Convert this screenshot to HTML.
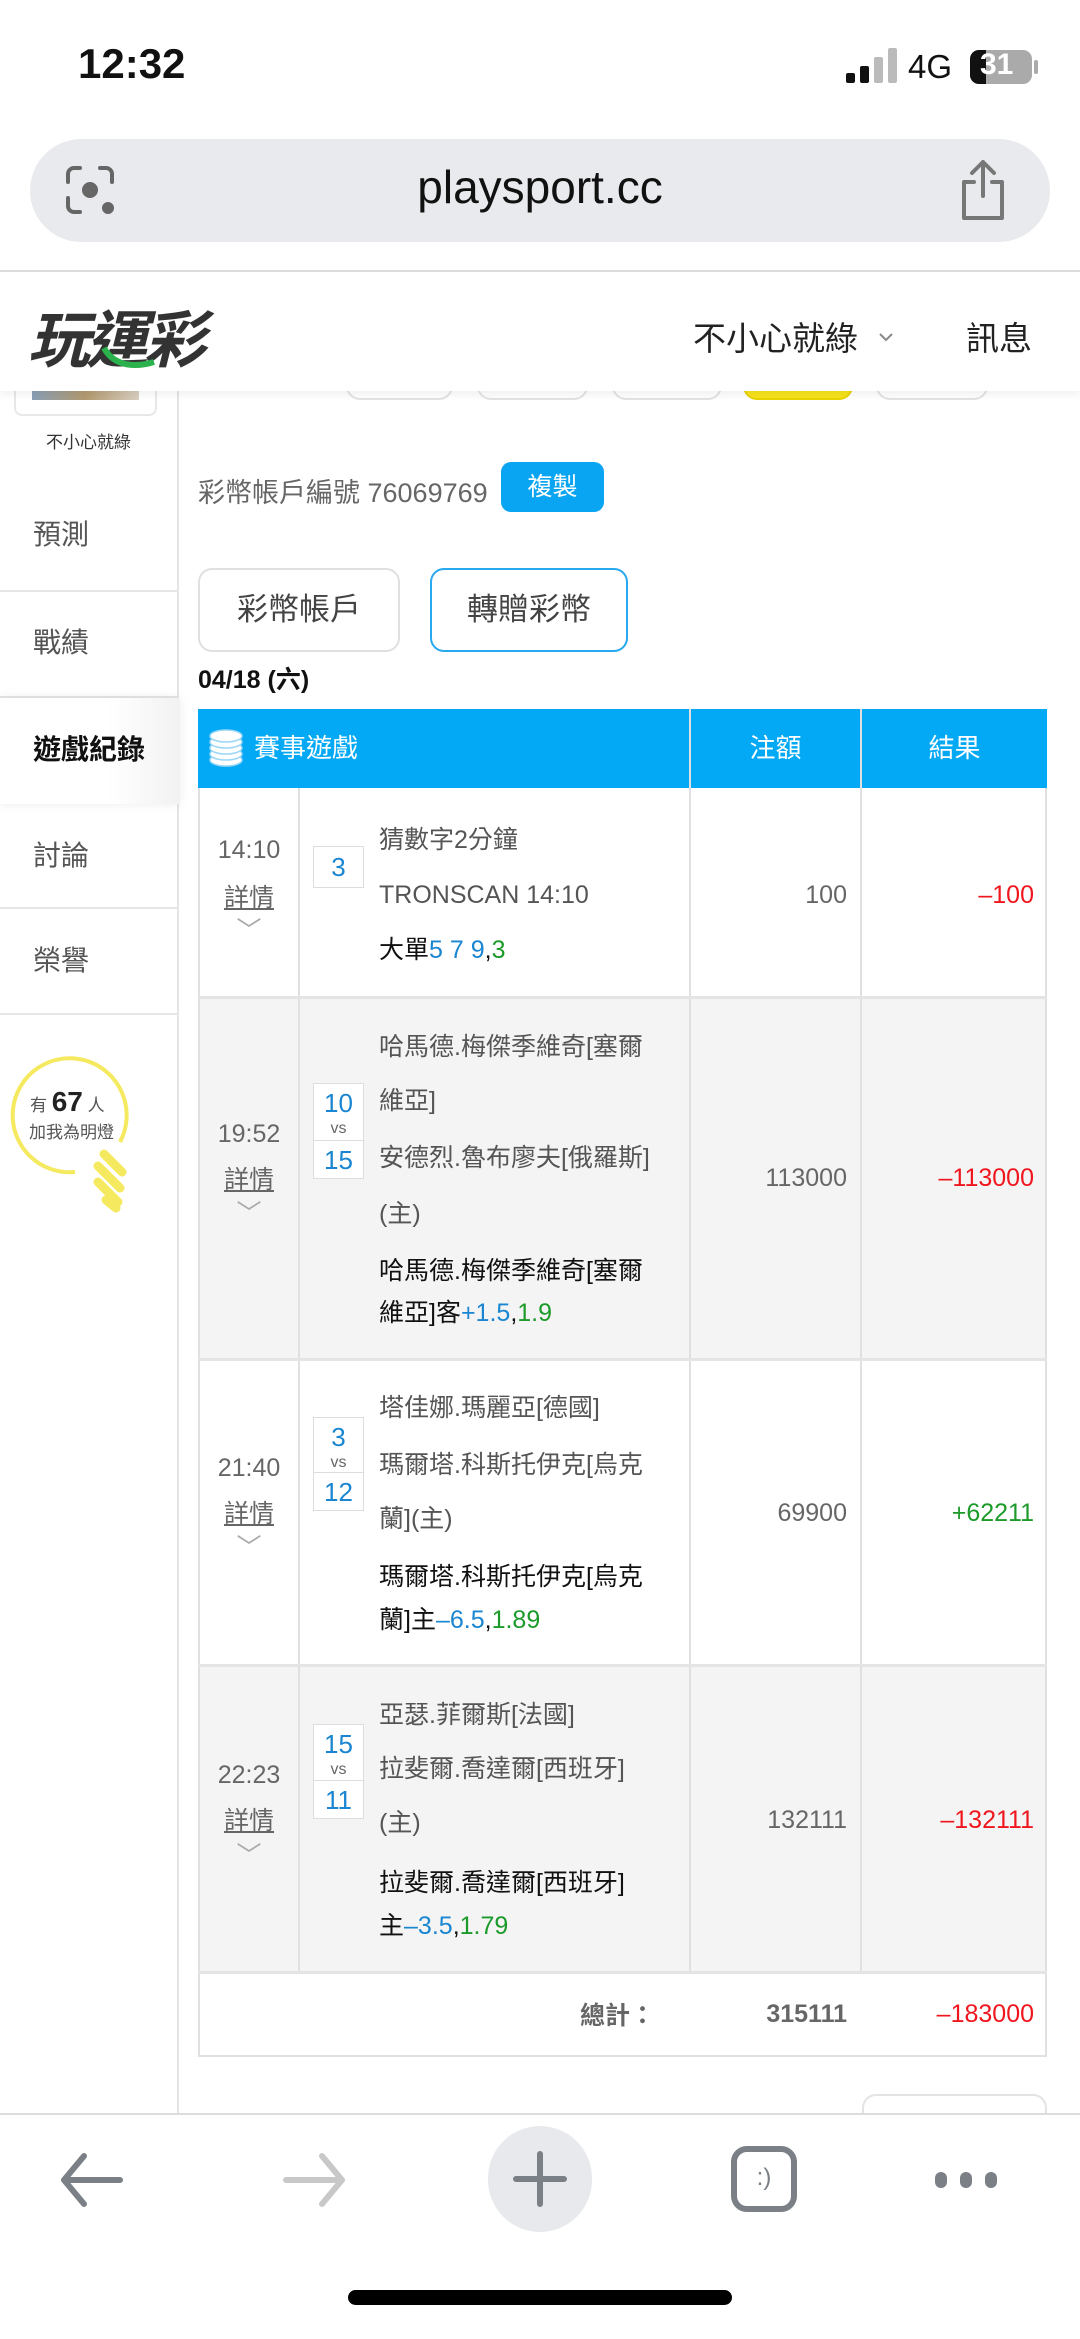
<!DOCTYPE html>
<html><head><meta charset="utf-8"><style>
*{margin:0;padding:0;box-sizing:border-box}
body{width:1080px;height:2339px;position:relative;background:#fff;font-family:"Liberation Sans","Noto Sans CJK TC",sans-serif;overflow:hidden;color:#333}
.a{position:absolute;white-space:nowrap}
.t{font-size:25px;line-height:36px;color:#555}
.b{font-size:25px;line-height:36px;color:#111}
.bl{color:#1a85d0}.gr{color:#1c9a2a}.rd{color:#f0161e}
.box{position:absolute;left:313px;width:51px;border:1px solid #ddd;background:#fff;color:#1a85d0;font-size:26px;text-align:center}
.vs{position:absolute;left:313px;width:51px;font-size:16px;text-align:center;color:#666;border-left:1px solid #ddd;border-right:1px solid #ddd;background:#fff}
.tm{position:absolute;left:200px;width:98px;text-align:center;font-size:25px;line-height:36px;color:#666}
.dt{text-decoration:underline}
.amt{position:absolute;right:233px;font-size:25px;line-height:36px;color:#666}
.res{position:absolute;right:46px;font-size:25px;line-height:36px}
.menu{position:absolute;left:33px;font-size:28px;line-height:40px;color:#555}
.div{position:absolute;left:0;width:177px;height:2px;background:#e6e6e6}
</style></head><body>
<div class="a" style="left:78px;top:40px;font-size:42px;font-weight:bold;color:#111">12:32</div>
<div class="a" style="left:846px;top:73px;width:9px;height:10px;background:#111;border-radius:2px"></div>
<div class="a" style="left:860px;top:66px;width:9px;height:17px;background:#111;border-radius:2px"></div>
<div class="a" style="left:874px;top:57px;width:9px;height:26px;background:#bbb;border-radius:2px"></div>
<div class="a" style="left:888px;top:48px;width:9px;height:35px;background:#bbb;border-radius:2px"></div>
<div class="a" style="left:908px;top:48px;font-size:33px;color:#111">4G</div>
<div class="a" style="left:970px;top:50px;width:62px;height:34px;background:#aaa;border-radius:9px;overflow:hidden"><div style="width:16px;height:34px;background:#111"></div><div class="a" style="left:10px;top:-2px;font-size:30px;font-weight:bold;color:#fff">31</div></div>
<div class="a" style="left:1034px;top:60px;width:4px;height:14px;background:#aaa;border-radius:2px"></div>
<div class="a" style="left:30px;top:139px;width:1020px;height:103px;background:#e8eaed;border-radius:52px"></div>
<svg class="a" style="left:62px;top:162px" width="56" height="56" viewBox="0 0 56 56" fill="none" stroke="#666" stroke-width="4" stroke-linecap="round"><path d="M6 20V12a6 6 0 0 1 6-6h6M38 6h6a6 6 0 0 1 6 6v8M6 36v8a6 6 0 0 0 6 6h6"/><circle cx="28" cy="28" r="6" fill="#666"/><circle cx="46" cy="46" r="4" fill="#666"/></svg>
<div class="a" style="left:0;width:1080px;top:160px;text-align:center;font-size:46px;color:#111">playsport.cc</div>
<svg class="a" style="left:958px;top:158px" width="50" height="64" viewBox="0 0 50 64" fill="none" stroke="#777" stroke-width="4" stroke-linecap="round" stroke-linejoin="round"><path d="M25 4v34M14 15L25 4l11 11M16 24H6v36h38V24H34"/></svg>
<div class="a" style="left:0;top:270px;width:1080px;height:2px;background:#ddd"></div>
<div class="a" style="left:0;top:272px;width:1080px;height:119px;background:#fff;box-shadow:0 4px 8px rgba(0,0,0,.06);z-index:3">
<div class="a" style="left:28px;top:18px;font-size:62px;font-weight:bold;font-style:italic;color:#333;letter-spacing:-4px">玩運彩</div>
<svg class="a" style="left:100px;top:70px" width="60" height="30"><path d="M4 6c10 18 30 20 50 14" stroke="#2bb24c" stroke-width="6" fill="none"/></svg>
<div class="a" style="left:693px;top:40px;font-size:33px;color:#222">不小心就綠</div>
<svg class="a" style="left:878px;top:60px" width="16" height="12"><path d="M2 2l6 6 6-6" stroke="#888" stroke-width="2" fill="none"/></svg>
<div class="a" style="left:966px;top:40px;font-size:33px;color:#222">訊息</div>
</div>
<div class="a" style="left:177px;top:391px;width:2px;height:1723px;background:#e4e4e4"></div>
<div class="a" style="left:14px;top:380px;width:143px;height:36px;border:2px solid #e8e8e8;border-top:none;border-radius:0 0 8px 8px;background:#fff"><div style="margin:0 16px;height:20px;background:linear-gradient(90deg,#8aa0b8,#b39a70,#d9cfc0)"></div></div>
<div class="a" style="left:0;width:177px;top:428px;text-align:center;font-size:17px;color:#333">不小心就綠</div>
<div class="menu" style="top:515px">預測</div>
<div class="div" style="top:590px"></div>
<div class="menu" style="top:623px">戰績</div>
<div class="div" style="top:696px"></div>
<div class="a" style="left:0;top:698px;width:180px;height:106px;background:linear-gradient(90deg,#fff 60%,#f2f2f2);box-shadow:0 0 10px rgba(0,0,0,.08)"></div>
<div class="menu" style="top:730px;font-weight:bold;color:#111">遊戲紀錄</div>
<div class="menu" style="top:836px">討論</div>
<div class="div" style="top:907px"></div>
<div class="menu" style="top:941px">榮譽</div>
<div class="div" style="top:1013px"></div>
<svg class="a" style="left:8px;top:1050px" width="130" height="170" viewBox="0 0 130 170"><path d="M67 122A57 57 0 1 1 112 92" stroke="#f5e960" stroke-width="4" fill="none"/><g stroke="#f5e960" stroke-width="9" stroke-linecap="round"><path d="M96 104l18 18M90 116l22 22M90 132l20 20M98 150l10 8"/></g></svg>
<div class="a" style="left:30px;top:1086px;font-size:17px;color:#555">有 <b style="font-size:28px;color:#222">67</b> 人</div>
<div class="a" style="left:29px;top:1118px;font-size:17px;color:#555">加我為明燈</div>
<div class="a" style="left:346px;top:360px;width:107px;height:40px;border:2px solid #e3e3e3;border-radius:14px"></div>
<div class="a" style="left:477px;top:360px;width:111px;height:40px;border:2px solid #e3e3e3;border-radius:14px"></div>
<div class="a" style="left:612px;top:360px;width:110px;height:40px;border:2px solid #e3e3e3;border-radius:14px"></div>
<div class="a" style="left:743px;top:360px;width:110px;height:40px;background:#f7e31c;border:2px solid #e8d300;border-radius:14px"></div>
<div class="a" style="left:876px;top:360px;width:112px;height:40px;border:2px solid #e3e3e3;border-radius:14px"></div>
<div class="a" style="left:198px;top:471px;font-size:27px;color:#666">彩幣帳戶編號 76069769</div>
<div class="a" style="left:501px;top:462px;width:103px;height:50px;background:#0aa5f2;border-radius:10px;color:#fff;font-size:25px;line-height:50px;text-align:center">複製</div>
<div class="a" style="left:198px;top:568px;width:202px;height:84px;border:2px solid #e0e0e0;border-radius:14px;font-size:31px;line-height:80px;text-align:center;color:#444">彩幣帳戶</div>
<div class="a" style="left:430px;top:568px;width:198px;height:84px;border:2px solid #28a8ee;border-radius:14px;font-size:31px;line-height:80px;text-align:center;color:#444">轉贈彩幣</div>
<div class="a" style="left:198px;top:660px;font-size:25px;font-weight:bold;color:#111">04/18 (六)</div>
<div class="a" style="left:198px;top:709px;width:849px;height:1348px;border:2px solid #e0e0e0;background:#fff"></div>
<div class="a" style="left:198px;top:709px;width:849px;height:79px;background:#03a9f4"></div>
<div class="a" style="left:689px;top:709px;width:2px;height:1263px;background:#e0e0e0"></div>
<div class="a" style="left:860px;top:709px;width:2px;height:1263px;background:#e0e0e0"></div>
<div class="a" style="left:298px;top:788px;width:2px;height:1184px;background:#e0e0e0"></div>
<div class="a" style="left:200px;top:997px;width:845px;height:362px;background:#f4f4f4"></div>
<div class="a" style="left:200px;top:1665px;width:845px;height:307px;background:#f4f4f4"></div>
<div class="a" style="left:298px;top:997px;width:2px;height:362px;background:#e0e0e0"></div>
<div class="a" style="left:298px;top:1665px;width:2px;height:307px;background:#e0e0e0"></div>
<div class="a" style="left:689px;top:997px;width:2px;height:362px;background:#e0e0e0"></div>
<div class="a" style="left:689px;top:1665px;width:2px;height:307px;background:#e0e0e0"></div>
<div class="a" style="left:860px;top:997px;width:2px;height:362px;background:#e0e0e0"></div>
<div class="a" style="left:860px;top:1665px;width:2px;height:307px;background:#e0e0e0"></div>
<div class="a" style="left:198px;top:996px;width:849px;height:3px;background:#e4e4e4"></div>
<div class="a" style="left:198px;top:1358px;width:849px;height:3px;background:#e4e4e4"></div>
<div class="a" style="left:198px;top:1664px;width:849px;height:3px;background:#e4e4e4"></div>
<div class="a" style="left:198px;top:1971px;width:849px;height:3px;background:#e4e4e4"></div>
<svg class="a" style="left:209px;top:729px" width="34" height="38" viewBox="0 0 34 38"><g fill="#fff" stroke="#9cd7f5" stroke-width="1.5"><ellipse cx="17" cy="31" rx="16" ry="6"/><ellipse cx="17" cy="25" rx="16" ry="6"/><ellipse cx="17" cy="19" rx="16" ry="6"/><ellipse cx="17" cy="13" rx="16" ry="6"/><ellipse cx="17" cy="7" rx="16" ry="6"/></g></svg>
<div class="a" style="left:254px;top:728px;font-size:26px;color:#fff">賽事遊戲</div>
<div class="a" style="left:691px;width:169px;top:728px;text-align:center;font-size:26px;color:#fff">注額</div>
<div class="a" style="left:862px;width:185px;top:728px;text-align:center;font-size:26px;color:#fff">結果</div>

<div class="tm" style="top:832px">14:10</div><div class="tm dt" style="top:880px">詳情</div><div class="tm" style="top:913px;color:#aaa">﹀</div>
<div class="box" style="top:846px;height:42px;line-height:40px">3</div>
<div class="a t" style="left:379px;top:822px">猜數字2分鐘</div>
<div class="a t" style="left:379px;top:877px">TRONSCAN 14:10</div>
<div class="a b" style="left:379px;top:932px">大單<span class="bl">5 7 9</span>,<span class="gr">3</span></div>
<div class="amt" style="top:877px">100</div><div class="res rd" style="top:877px">–100</div>

<div class="tm" style="top:1116px">19:52</div><div class="tm dt" style="top:1162px">詳情</div><div class="tm" style="top:1196px;color:#aaa">﹀</div>
<div class="box" style="top:1083px;height:39px;line-height:38px">10</div><div class="vs" style="top:1120px;height:20px;line-height:18px">vs</div><div class="box" style="top:1140px;height:39px;line-height:38px">15</div>
<div class="a t" style="left:379px;top:1029px">哈馬德.梅傑季維奇[塞爾</div>
<div class="a t" style="left:379px;top:1083px">維亞]</div>
<div class="a t" style="left:379px;top:1140px">安德烈.魯布廖夫[俄羅斯]</div>
<div class="a t" style="left:379px;top:1196px">(主)</div>
<div class="a b" style="left:379px;top:1253px">哈馬德.梅傑季維奇[塞爾</div>
<div class="a b" style="left:379px;top:1295px">維亞]客<span class="bl">+1.5</span>,<span class="gr">1.9</span></div>
<div class="amt" style="top:1160px">113000</div><div class="res rd" style="top:1160px">–113000</div>

<div class="tm" style="top:1450px">21:40</div><div class="tm dt" style="top:1496px">詳情</div><div class="tm" style="top:1530px;color:#aaa">﹀</div>
<div class="box" style="top:1417px;height:39px;line-height:38px">3</div><div class="vs" style="top:1454px;height:20px;line-height:18px">vs</div><div class="box" style="top:1472px;height:39px;line-height:38px">12</div>
<div class="a t" style="left:379px;top:1390px">塔佳娜.瑪麗亞[德國]</div>
<div class="a t" style="left:379px;top:1447px">瑪爾塔.科斯托伊克[烏克</div>
<div class="a t" style="left:379px;top:1501px">蘭](主)</div>
<div class="a b" style="left:379px;top:1559px">瑪爾塔.科斯托伊克[烏克</div>
<div class="a b" style="left:379px;top:1602px">蘭]主<span class="bl">–6.5</span>,<span class="gr">1.89</span></div>
<div class="amt" style="top:1495px">69900</div><div class="res gr" style="top:1495px">+62211</div>

<div class="tm" style="top:1757px">22:23</div><div class="tm dt" style="top:1803px">詳情</div><div class="tm" style="top:1838px;color:#aaa">﹀</div>
<div class="box" style="top:1724px;height:39px;line-height:38px">15</div><div class="vs" style="top:1761px;height:20px;line-height:18px">vs</div><div class="box" style="top:1780px;height:39px;line-height:38px">11</div>
<div class="a t" style="left:379px;top:1697px">亞瑟.菲爾斯[法國]</div>
<div class="a t" style="left:379px;top:1751px">拉斐爾.喬達爾[西班牙]</div>
<div class="a t" style="left:379px;top:1805px">(主)</div>
<div class="a b" style="left:379px;top:1865px">拉斐爾.喬達爾[西班牙]</div>
<div class="a b" style="left:379px;top:1908px">主<span class="bl">–3.5</span>,<span class="gr">1.79</span></div>
<div class="amt" style="top:1802px">132111</div><div class="res rd" style="top:1802px">–132111</div>

<div class="a" style="left:580px;top:1996px;font-size:25px;font-weight:bold;color:#666">總計：</div>
<div class="amt" style="top:1996px;font-weight:bold">315111</div><div class="res rd" style="top:1996px">–183000</div>
<div class="a" style="left:862px;top:2094px;width:185px;height:40px;border:2px solid #e3e3e3;border-radius:14px"></div>
<div class="a" style="left:0;top:2113px;width:1080px;height:226px;background:#fff;border-top:2px solid #ddd"></div>
<svg class="a" style="left:58px;top:2152px" width="66" height="56" viewBox="0 0 66 56" fill="none" stroke="#7a8085" stroke-width="6" stroke-linecap="round" stroke-linejoin="round"><path d="M62 28H6M26 4L6 28l20 24"/></svg>
<svg class="a" style="left:282px;top:2152px" width="66" height="56" viewBox="0 0 66 56" fill="none" stroke="#c8c8c8" stroke-width="6" stroke-linecap="round" stroke-linejoin="round"><path d="M4 28h56M40 4l20 24-20 24"/></svg>
<div class="a" style="left:488px;top:2126px;width:104px;height:106px;border-radius:52px;background:#e8e9ec"></div>
<svg class="a" style="left:512px;top:2150px" width="56" height="58" viewBox="0 0 56 58" stroke="#7a8085" stroke-width="6" stroke-linecap="round"><path d="M28 4v50M4 29h48"/></svg>
<div class="a" style="left:731px;top:2146px;width:66px;height:66px;border:6px solid #7a8085;border-radius:16px;text-align:center;font-size:24px;line-height:52px;color:#7a8085">:)</div>
<div class="a" style="left:935px;top:2172px;width:12px;height:16px;border-radius:6px;background:#7a8085"></div>
<div class="a" style="left:960px;top:2172px;width:12px;height:16px;border-radius:6px;background:#7a8085"></div>
<div class="a" style="left:985px;top:2172px;width:12px;height:16px;border-radius:6px;background:#7a8085"></div>
<div class="a" style="left:348px;top:2290px;width:384px;height:15px;border-radius:8px;background:#000"></div>
</body></html>
